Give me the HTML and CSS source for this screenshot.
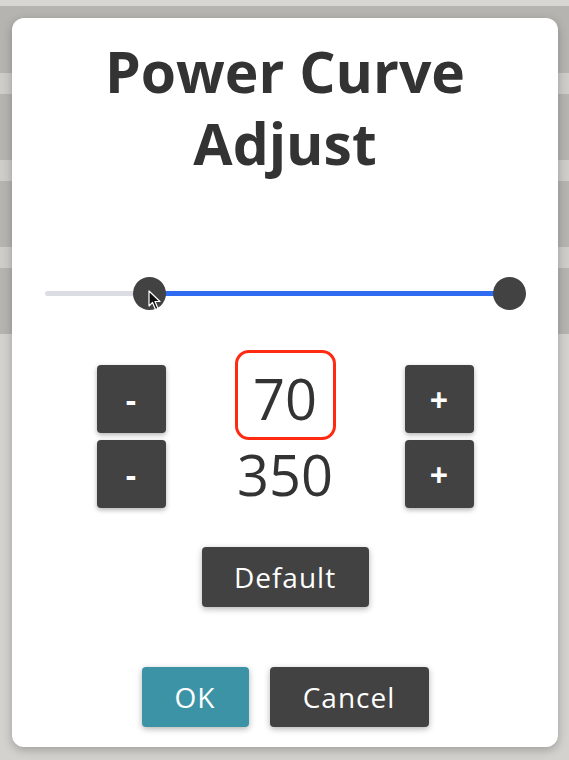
FILE: index.html
```html
<!DOCTYPE html>
<html lang="en">
<head>
  <meta charset="UTF-8">
  <meta name="viewport" content="width=device-width, initial-scale=1.0">
  <title>Power Curve Adjust</title>
  <link rel="stylesheet" href="styles.css">
</head>
<body>
  <div class="dialog">
    <h1 class="dialog-title">Power Curve<br>Adjust</h1>

    <div class="range">
      <div class="range-track"></div>
      <div class="range-fill"></div>
      <div class="range-thumb thumb-low"></div>
      <div class="range-thumb thumb-high"></div>
      <!-- mouse pointer resting on the low thumb -->
      <svg class="pointer" width="14" height="22" viewBox="0 0 14 22">
        <path d="M1 1 L1 16 L4.5 12.5 L7.5 19.5 L10 18.5 L7 11.5 L12 11.5 Z" fill="#111" stroke="#fff" stroke-width="1.2" stroke-linejoin="round"/>
      </svg>
    </div>

    <div class="stepper">
      <button class="step-btn">-</button>
      <div class="step-value active">70</div>
      <button class="step-btn">+</button>
      <button class="step-btn">-</button>
      <div class="step-value">350</div>
      <button class="step-btn">+</button>
    </div>

    <div class="default-row">
      <button class="btn btn-dark default-btn">Default</button>
    </div>

    <div class="actions">
      <button class="btn btn-ok">OK</button>
      <button class="btn btn-dark cancel-btn">Cancel</button>
    </div>
  </div>
</body>
</html>
```

FILE: styles.css
```css
* {
  box-sizing: border-box;
  margin: 0;
  padding: 0;
}
body, html {
  font-family: 'Open Sans', 'Liberation Sans', sans-serif;
  height: 100%;
  overflow: hidden;
}
body {
  /* dimmed page behind the dialog */
  background: linear-gradient(to bottom,
    #d8d7d3 0, #d8d7d3 6px,
    #b5b4b0 6px, #b5b4b0 73px,
    #cecdc9 73px, #cecdc9 94px,
    #b5b4b0 94px, #b5b4b0 160px,
    #cecdc9 160px, #cecdc9 181px,
    #b5b4b0 181px, #b5b4b0 247px,
    #cecdc9 247px, #cecdc9 268px,
    #b5b4b0 268px, #b5b4b0 334px,
    #d3d2ce 334px, #d3d2ce 100%);
  padding: 18px 11px 0 12px;
}
.dialog {
  width: 546px;
  background-color: #ffffff;
  border-radius: 12px;
  box-shadow: 0 3px 10px rgba(0, 0, 0, 0.25);
  padding: 17px 0 20px;
  display: flex;
  flex-direction: column;
  align-items: center;
}
.dialog-title {
  font-size: 57px;
  line-height: 72px;
  font-weight: 700;
  color: #333333;
  text-align: center;
}

.range {
  position: relative;
  width: 481px;
  height: 34px;
  margin-top: 98px;
  align-self: flex-start;
  margin-left: 33px;
}
.range-track {
  position: absolute;
  left: 0;
  top: 14px;
  width: 465px;
  height: 5px;
  border-radius: 3px;
  background-color: #dcdce4;
}
.range-fill {
  position: absolute;
  left: 105px;
  top: 14px;
  width: 360px;
  height: 5px;
  background-color: #2f6bf0;
}
.range-thumb {
  position: absolute;
  top: 0;
  width: 33px;
  height: 33px;
  border-radius: 50%;
  background-color: #424242;
}
.thumb-low {
  left: 88px;
}
.thumb-high {
  left: 448px;
}
.pointer {
  position: absolute;
  left: 103px;
  top: 13px;
}

.stepper {
  display: grid;
  grid-template-columns: 69px 1fr 69px;
  grid-auto-rows: 68px;
  row-gap: 7px;
  width: 377px;
  margin-top: 54px;
  align-items: center;
  justify-items: center;
}
.step-btn {
  width: 69px;
  height: 68px;
  border: none;
  border-radius: 4px;
  background-color: #424242;
  color: #ffffff;
  font-family: inherit;
  font-size: 32px;
  font-weight: 700;
  box-shadow: 0 2px 5px rgba(0, 0, 0, 0.3);
  cursor: pointer;
}
.step-value {
  font-size: 56px;
  font-weight: 400;
  color: #333333;
  line-height: 68px;
}
.step-value.active {
  width: 101px;
  height: 90px;
  margin-top: -8px;
  line-height: 90px;
  text-align: center;
  border: 3px solid #ff2a12;
  border-radius: 14px;
}

.default-row {
  margin-top: 39px;
}
.actions {
  display: flex;
  gap: 21px;
  margin-top: 60px;
}
.btn {
  height: 60px;
  border: none;
  border-radius: 4px;
  color: #ffffff;
  font-family: inherit;
  font-size: 28px;
  font-weight: 500;
  letter-spacing: 1px;
  box-shadow: 0 2px 6px rgba(0, 0, 0, 0.3);
  cursor: pointer;
}
.btn-dark {
  background-color: #424242;
}
.default-btn {
  width: 167px;
}
.btn-ok {
  width: 107px;
  background-color: #3d93a6;
}
.cancel-btn {
  width: 159px;
}
```
